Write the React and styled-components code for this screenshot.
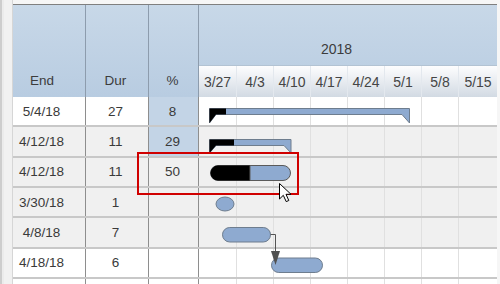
import React from "react";
import styled, { createGlobalStyle } from "styled-components";

const Global = createGlobalStyle`
  html, body { margin: 0; padding: 0; }
  body {
    width: 500px;
    height: 284px;
    overflow: hidden;
    background: #f6f6f6;
    font-family: "Liberation Sans", Arial, sans-serif;
  }
`;

const COLS = "73px 63px 50px 298px";

const Page = styled.div`
  position: relative;
  width: 500px;
  height: 284px;
  display: flex;
  overflow: hidden;
  background: #f6f6f6;
`;

const LeftStrip = styled.div`
  width: 13px;
  flex: none;
  background: linear-gradient(
    to right,
    #cdcdcd 0 2px,
    #ebebeb 2px 4px,
    #f1f1f1 4px 12px,
    #d6d6d6 12px 13px
  );
`;

const Main = styled.div`
  width: 484px;
  flex: none;
  padding-top: 4px;
  display: flex;
  flex-direction: column;
`;

const Header = styled.div`
  display: grid;
  grid-template-columns: ${COLS};
  grid-template-rows: 60px 32px;
  border-top: 1px solid #7f7f7f;
  background: linear-gradient(#c8d8e8, #b8cce1);
`;

const HeadLabel = styled.div`
  grid-row: 1 / span 2;
  border-right: 1px solid #8d9cad;
  display: flex;
  align-items: flex-end;
  justify-content: center;
  padding-bottom: 8px;
  padding-right: ${(p) => p.$pr || 0}px;
  font-size: 13.5px;
  line-height: 16px;
  color: #3c3c3c;
`;

const YearCell = styled.div`
  grid-column: 4;
  grid-row: 1;
  display: flex;
  align-items: flex-end;
  justify-content: center;
  padding-bottom: 8px;
  padding-right: 23px;
  font-size: 14px;
  line-height: 16px;
  color: #3c3c3c;
`;

const DateRow = styled.div`
  grid-column: 4;
  grid-row: 2;
  display: flex;
  border-top: 1px solid #b3c3d3;
`;

const DateCell = styled.div`
  width: 37px;
  flex: ${(p) => (p.$last ? "1" : "none")};
  box-sizing: border-box;
  border-left: 1px solid #e3e8ee;
  &:first-child { border-left: none; }
  background: linear-gradient(#fdfdfe, #d2dae3);
  display: flex;
  align-items: center;
  justify-content: center;
  font-size: 14px;
  color: #454545;
`;

const Row = styled.div`
  display: grid;
  grid-template-columns: ${COLS};
  height: 30.33px;
  flex: none;
  box-sizing: border-box;
  border-bottom: 2px solid #c8c8c8;
  background: ${(p) => (p.$alt ? "#f0f0f0" : "#ffffff")};
`;

const Cell = styled.div`
  border-right: 1px solid #8e8e8e;
  display: flex;
  align-items: center;
  justify-content: center;
  padding-right: ${(p) => p.$pr || 0}px;
  font-size: 13.5px;
  color: #3a3a3a;
  background: ${(p) => (p.$hl ? "#c3d4e6" : "transparent")};
`;

const Timeline = styled.div`
  display: flex;
`;

const Week = styled.div`
  width: 37px;
  flex: ${(p) => (p.$last ? "1" : "none")};
  box-sizing: border-box;
  border-left: 1px solid #e0e0e0;
  &:first-child { border-left: none; }
`;

const Overlay = styled.svg`
  position: absolute;
  left: 0;
  top: 0;
  width: 500px;
  height: 284px;
  pointer-events: none;
`;

const dates = ["3/27", "4/3", "4/10", "4/17", "4/24", "5/1", "5/8", "5/15"];

const rows = [
  { end: "5/4/18", dur: "27", pct: "8", alt: false, hl: true },
  { end: "4/12/18", dur: "11", pct: "29", alt: true, hl: true },
  { end: "4/12/18", dur: "11", pct: "50", alt: true },
  { end: "3/30/18", dur: "1", pct: "", alt: true },
  { end: "4/8/18", dur: "7", pct: "", alt: true },
  { end: "4/18/18", dur: "6", pct: "", alt: false },
  { end: "", dur: "", pct: "", alt: false },
];

const BLUE = "#8eaad0";
const EDGE = "#6e7d8e";

function Weeks() {
  return (
    <Timeline>
      {dates.map((d, i) => (
        <Week key={d} $last={i === dates.length - 1} />
      ))}
    </Timeline>
  );
}

export default function App() {
  return (
    <>
      <Global />
      <Page>
        <LeftStrip />
        <Main>
          <Header>
            <HeadLabel $pr={14}>End</HeadLabel>
            <HeadLabel $pr={3}>Dur</HeadLabel>
            <HeadLabel $pr={2}>%</HeadLabel>
            <YearCell>2018</YearCell>
            <DateRow>
              {dates.map((d, i) => (
                <DateCell key={d} $last={i === dates.length - 1}>
                  {d}
                </DateCell>
              ))}
            </DateRow>
          </Header>
          {rows.map((r, i) => (
            <Row key={i} $alt={r.alt}>
              <Cell $pr={15}>{r.end}</Cell>
              <Cell $pr={3}>{r.dur}</Cell>
              <Cell $pr={2} $hl={r.hl}>{r.pct}</Cell>
              <Weeks />
            </Row>
          ))}
        </Main>

        <Overlay viewBox="0 0 500 284">
          {/* row 1 summary */}
          <path
            d="M209.5,108.5 H409.5 V123 L402,114.5 H216 L209.5,123 Z"
            fill={BLUE}
            stroke={EDGE}
            strokeWidth="1"
          />
          <path d="M209.5,108.5 H226 V114.5 H216 L209.5,123 Z" fill="#000" />
          {/* row 2 summary */}
          <path
            d="M209.5,139.5 H291 V153 L284,145.5 H216 L209.5,153 Z"
            fill={BLUE}
            stroke={EDGE}
            strokeWidth="1"
          />
          <path d="M209.5,139.5 H234 V145.5 H216 L209.5,153 Z" fill="#000" />
          {/* row 3 task with progress */}
          <rect x="210.5" y="165.5" width="80" height="15" rx="7.5" fill={BLUE} stroke="#5a5a5a" />
          <path d="M218,165.5 H250 V180.5 H218 A7.5,7.5 0 0 1 218,165.5 Z" fill="#000" />
          <line x1="250" y1="165.5" x2="250" y2="180.5" stroke="#5a5a5a" />
          {/* row 4 milestone-ish */}
          <ellipse cx="225" cy="204" rx="9" ry="7" fill={BLUE} stroke={EDGE} />
          {/* row 5 */}
          <rect x="222.5" y="227.5" width="48" height="14.5" rx="7.25" fill={BLUE} stroke={EDGE} />
          {/* row 6 */}
          <rect x="271.5" y="258" width="51" height="14.5" rx="7.25" fill={BLUE} stroke={EDGE} />
          {/* dependency */}
          <path d="M270.5,234.5 H275.5 V254" fill="none" stroke="#555" strokeWidth="1" />
          <polygon points="271,251 280,251 275.5,265" fill="#505050" />
          {/* selection */}
          <rect x="138" y="153" width="160" height="41" fill="none" stroke="#d00000" strokeWidth="2" />
          {/* cursor */}
          <path
            d="M279.5,183.5 V199 L283.3,195.3 L286.2,201.6 L288.8,200.5 L286,194.3 L291,194.3 Z"
            fill="#fff"
            stroke="#000"
            strokeWidth="1"
            strokeLinejoin="miter"
          />
        </Overlay>
      </Page>
    </>
  );
}
